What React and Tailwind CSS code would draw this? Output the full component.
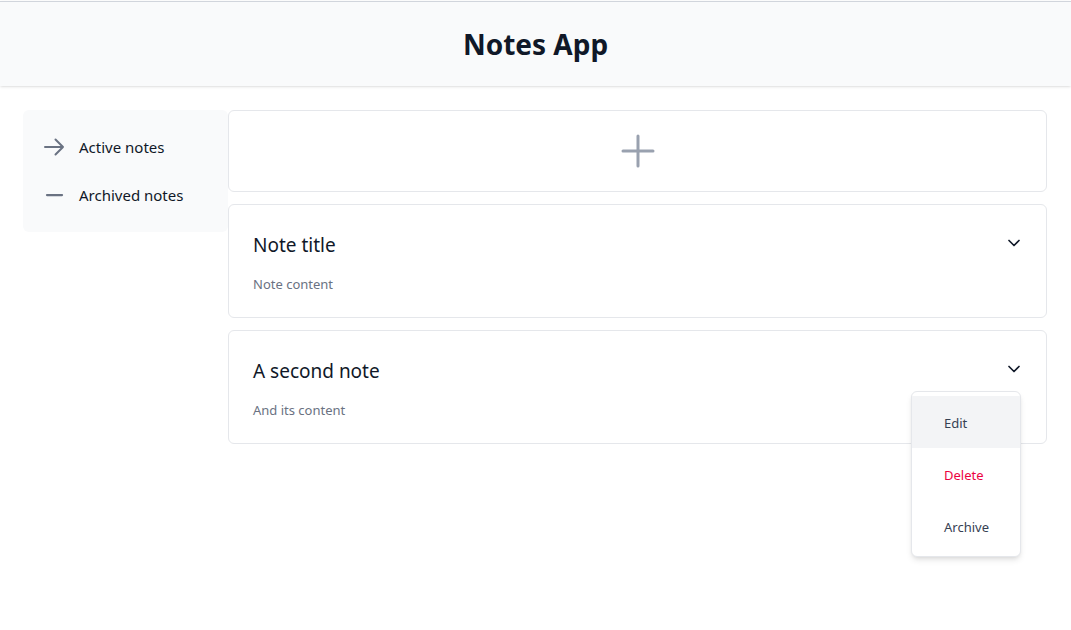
import { ChevronDown } from "lucide-react";

const notes = [
  { id: 1, title: "Note title", content: "Note content" },
  { id: 2, title: "A second note", content: "And its content", open: true },
];

const ArrowIcon = () => (
  <svg viewBox="0 0 24 24" fill="none" stroke="currentColor" strokeWidth={2} strokeLinecap="round" strokeLinejoin="round" className="h-6 w-6 text-gray-500">
    <path d="M13.5 4.5 21 12m0 0-7.5 7.5M21 12H3" />
  </svg>
);

const MinusIcon = () => (
  <svg viewBox="0 0 24 24" fill="none" stroke="currentColor" strokeWidth={2.25} strokeLinecap="round" className="h-6 w-6 text-gray-500">
    <path d="M5 12h15" />
  </svg>
);

const NoteCard = ({ note }) => (
  <div className="relative h-[114px] rounded-md border border-gray-200 bg-white px-6 pt-7">
    <div className="flex items-start justify-between">
      <h2 className="text-[19px] leading-6 text-gray-900">{note.title}</h2>
      <ChevronDown className="-mr-[2px] h-5 w-5 text-gray-900" strokeWidth={2} />
    </div>
    <p className="mt-[17px] text-[13px] leading-5 text-gray-500">{note.content}</p>
    {note.open && (
      <div className="absolute right-[25px] top-[60px] z-10 w-[110px] overflow-hidden rounded-md border border-gray-200 bg-white pb-1 pt-1 shadow-md">
        <button className="block h-[52px] w-full bg-gray-100 pl-8 pt-1 text-left text-[13px] text-gray-700">
          Edit
        </button>
        <button className="block h-[52px] w-full pl-8 pt-1 text-left text-[13px] text-rose-600">
          Delete
        </button>
        <button className="block h-[52px] w-full pl-8 pt-1 text-left text-[13px] text-gray-700">
          Archive
        </button>
      </div>
    )}
  </div>
);

const App = () => {
  return (
    <div className="min-h-screen bg-white pt-px font-['Noto_Sans',sans-serif]">
      <header className="flex h-[85px] items-center justify-center border-t border-gray-300 bg-gray-50 shadow-sm">
        <h1 className="text-[28px] font-bold text-gray-900">Notes App</h1>
      </header>

      <div className="flex items-start px-[23px] pt-6">
        <nav className="w-[205px] rounded-md bg-gray-50 px-[19px] py-[13px]">
          <a className="flex h-12 items-center gap-[13px] text-[15px] text-gray-900">
            <ArrowIcon />
            Active notes
          </a>
          <a className="flex h-12 items-center gap-[13px] text-[15px] text-gray-900">
            <MinusIcon />
            Archived notes
          </a>
        </nav>

        <main className="flex w-[819px] flex-col gap-3">
          <button className="flex h-[82px] items-center justify-center rounded-md border border-gray-200 bg-white">
            <svg viewBox="0 0 34 34" fill="none" stroke="currentColor" strokeWidth={3} strokeLinecap="round" className="h-[34px] w-[34px] text-gray-400">
              <path d="M17 2v30M2 17h30" />
            </svg>
          </button>
          {notes.map((n) => (
            <NoteCard key={n.id} note={n} />
          ))}
        </main>
      </div>
    </div>
  );
};

export default App;
